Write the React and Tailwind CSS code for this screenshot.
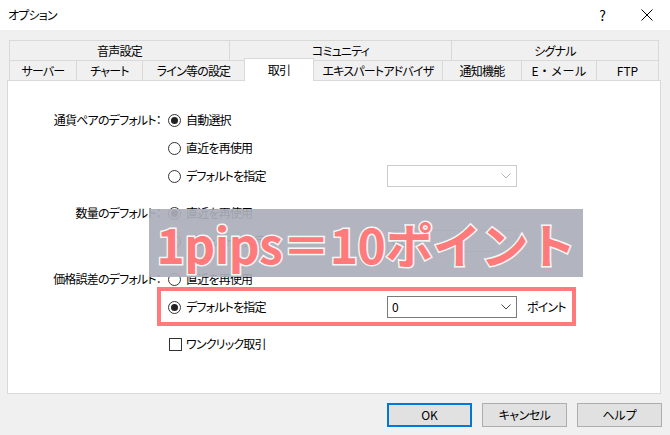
import React from "react";

function Radio({ checked }) {
  return (
    <span className="w-[13px] h-[13px] rounded-full border border-[#333] bg-white flex items-center justify-center shrink-0">
      {checked && <span className="w-[7px] h-[7px] rounded-full bg-[#222]" />}
    </span>
  );
}

function Chevron({ color }) {
  return (
    <svg width="10" height="6" viewBox="0 0 10 6" className="shrink-0">
      <path d="M0.5 0.5 L5 5 L9.5 0.5" fill="none" stroke={color} strokeWidth="1" />
    </svg>
  );
}

function Select({ value, disabled }) {
  return (
    <div
      className={
        "w-[130px] h-[22px] bg-white border flex items-center pl-[4px] pr-[5px] " +
        (disabled ? "border-[#cccccc]" : "border-[#7a7a7a]")
      }
    >
      <span className="flex-1 text-[12px] leading-none">{value}</span>
      <Chevron color={disabled ? "#b5b5b5" : "#444"} />
    </div>
  );
}

function Option({ checked, label, children }) {
  return (
    <div className="h-[28px] flex items-center">
      <div className="w-[219px] flex items-center gap-[5px]">
        <Radio checked={checked} />
        <span>{label}</span>
      </div>
      {children}
    </div>
  );
}

function Group({ label, children, className }) {
  return (
    <div className={"flex " + (className || "")}>
      <div className="w-[153px] h-[28px] flex items-center justify-end">{label}</div>
      <div className="pl-[7px] flex flex-col">{children}</div>
    </div>
  );
}

const tab = "h-full border-l border-t border-[#d9d9d9] flex items-center justify-center";

export default function App() {
  return (
    <div className="relative w-[670px] h-[435px] bg-[#f0f0f0] overflow-hidden text-[12px] tracking-[-0.8px] text-black font-['Noto_Sans_CJK_JP',sans-serif] [font-feature-settings:'palt']">
      {/* title bar */}
      <div className="h-[30px] bg-white flex items-center pl-[8px]">
        <span>オプション</span>
        <span className="ml-auto text-[14px] mr-[36px]">?</span>
        <svg width="12" height="12" viewBox="0 0 12 12" className="mr-[17px]">
          <path d="M0.5 0.5 L11.5 11.5 M11.5 0.5 L0.5 11.5" stroke="#000" strokeWidth="1" />
        </svg>
      </div>

      {/* tabs */}
      <div className="mt-[10px] ml-[9px] w-[650px]">
        <div className="h-[20px] flex">
          <div className={tab + " w-[220px]"}>音声設定</div>
          <div className={tab + " w-[222px]"}>コミュニティ</div>
          <div className={tab + " w-[208px] border-r"}>シグナル</div>
        </div>
        <div className="h-[20px] flex items-end">
          <div className={tab + " w-[67px]"}>サーバー</div>
          <div className={tab + " w-[66px]"}>チャート</div>
          <div className={tab + " w-[102px]"}>ライン等の設定</div>
          <div className="relative z-10 w-[70px] h-[23px] -mb-px bg-white border-l border-t border-r border-[#d9d9d9] flex items-center justify-center pb-[1px]">
            取引
          </div>
          <div className={tab + " w-[128px] border-l-0"}>エキスパートアドバイザ</div>
          <div className={tab + " w-[79px]"}>通知機能</div>
          <div className={tab + " w-[75px] tracking-normal [font-feature-settings:normal]"}>E・メール</div>
          <div className={tab + " w-[63px] border-r tracking-normal"}>FTP</div>
        </div>
      </div>

      {/* panel */}
      <div className="ml-[7px] w-[654px] h-[314px] bg-white border border-[#d9d9d9] pt-[25px]">
        <Group label="通貨ペアのデフォルト：">
          <Option checked label="自動選択" />
          <Option label="直近を再使用" />
          <Option label="デフォルトを指定">
            <Select value="" disabled />
          </Option>
        </Group>
        <Group label="数量のデフォルト：" className="mt-[9px]">
          <Option checked label="直近を再使用" />
          <Option label="デフォルトを指定">
            <Select value="0.01" disabled />
          </Option>
        </Group>
        <Group label="価格誤差のデフォルト：" className="mt-[10px]">
          <Option label="直近を再使用" />
          <Option checked label="デフォルトを指定">
            <Select value="0" />
            <span className="ml-[10px]">ポイント</span>
          </Option>
        </Group>
        <div className="flex mt-[9px]">
          <div className="w-[153px]" />
          <div className="pl-[8px] h-[28px] flex items-center gap-[4px]">
            <span className="w-[13px] h-[13px] border border-[#333] bg-white" />
            <span>ワンクリック取引</span>
          </div>
        </div>
      </div>

      {/* buttons */}
      <div className="mt-[9px] flex justify-end gap-[10px] pr-[8px] tracking-normal">
        <button className="w-[85px] h-[24px] bg-[#e1e1e1] border-2 border-[#0078d7] flex items-center justify-center">OK</button>
        <button className="w-[85px] h-[24px] bg-[#e1e1e1] border border-[#adadad] flex items-center justify-center tracking-[-0.5px]">キャンセル</button>
        <button className="w-[85px] h-[24px] bg-[#e1e1e1] border border-[#adadad] flex items-center justify-center">ヘルプ</button>
      </div>

      {/* annotation overlays */}
      <div className="absolute left-[149px] top-[209px] w-[434px] h-[68px] bg-[#abafba]/[0.92] flex items-center justify-center">
        <span className="text-[48px] font-bold leading-none tracking-[-0.5px] text-[#ff7b7b] [-webkit-text-stroke:3px_#f7f7f7] [paint-order:stroke_fill] [font-feature-settings:normal]">
          1pips＝10ポイント
        </span>
      </div>
      <div className="absolute left-[157px] top-[287px] w-[419px] h-[39px] border-[4px] border-[#ff7b7b]" />
    </div>
  );
}
